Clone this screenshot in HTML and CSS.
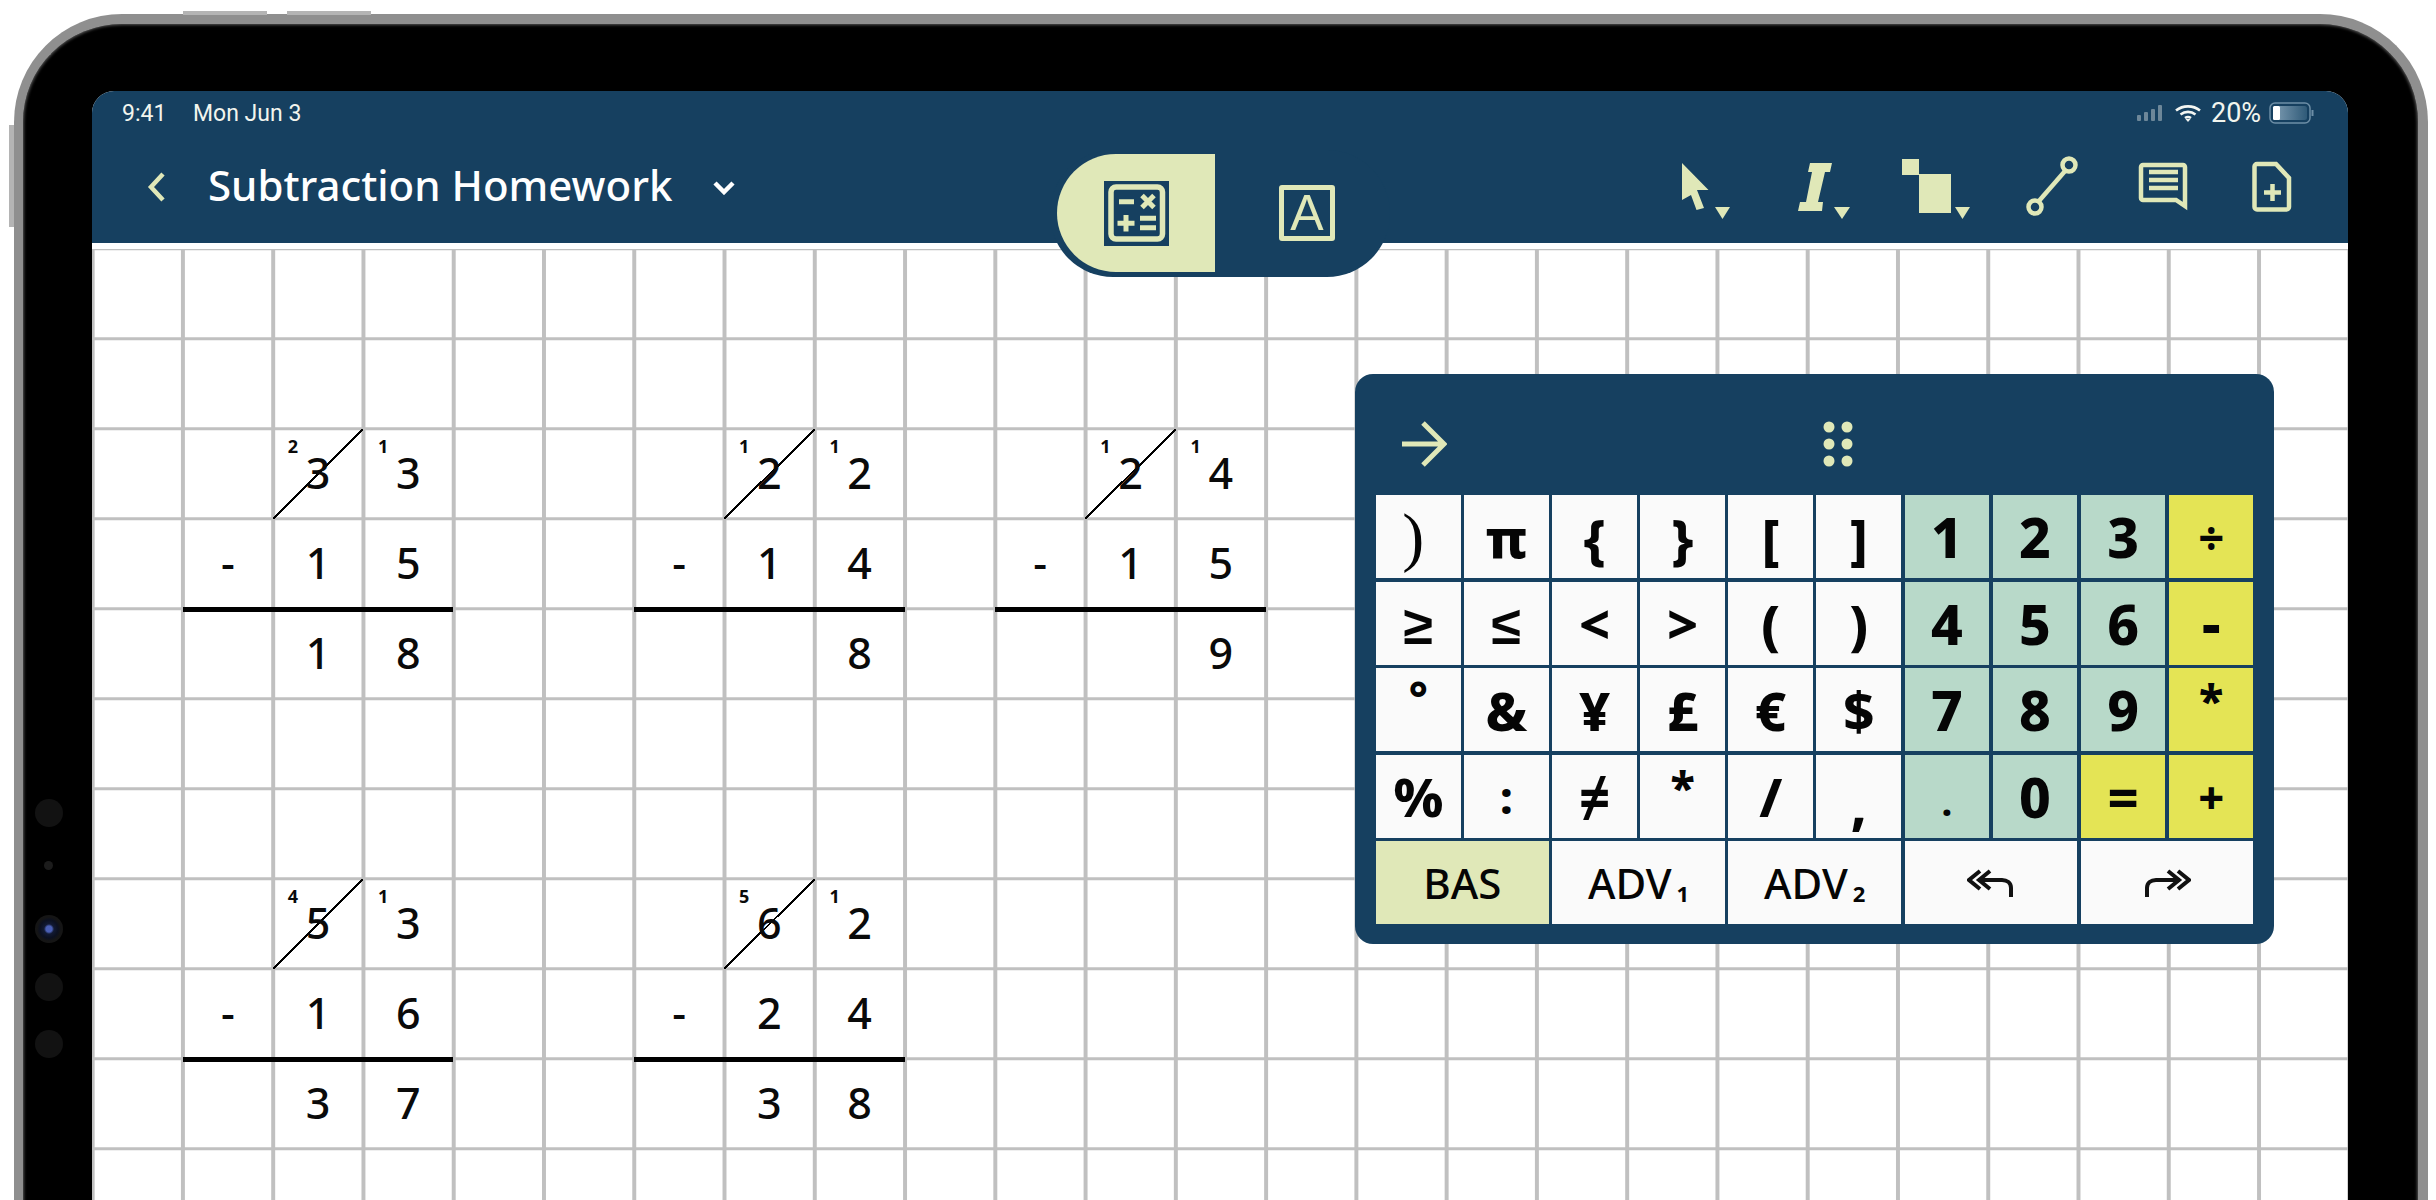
FILE: index.html
```html
<!DOCTYPE html>
<html lang="en">
<head>
<meta charset="utf-8">
<title>Subtraction Homework</title>
<link rel="stylesheet" href="styles.css">
</head>
<body>
<div class="device">
  <span class="hw vol vol-a"></span><span class="hw vol vol-b"></span><span class="hw side"></span>
  <span class="cam cam-1"></span><span class="cam cam-2"></span><span class="cam cam-3"></span><span class="cam cam-4"></span><span class="cam cam-5"></span>
  <div class="screen">
    <header class="appbar">
      <div class="status">
        <span class="time">9:41</span><span class="date">Mon Jun 3</span>
        <div class="status-right">
          <svg class="signal" viewBox="0 0 28 18"><rect x="0" y="11" width="4" height="6" rx="1"/><rect x="7" y="8" width="4" height="9" rx="1"/><rect x="14" y="5" width="4" height="12" rx="1"/><rect x="21" y="1" width="4" height="16" rx="1"/></svg>
          <svg class="wifi" viewBox="0 0 28 18"><path d="M2 6.500C9 1 19 1 26 6.500M6.500 10.500c4.500-3.500 10.500-3.500 15 0M11 14c1.800-1.200 4.200-1.200 6 0" fill="none" stroke="#f4f6f2" stroke-width="2.600"/><path d="M11.500 15h5L14 18z" fill="#f4f6f2"/></svg>
          <span class="pct">20%</span>
          <svg class="battery" viewBox="0 0 46 22"><defs><linearGradient id="bf" x1="0" x2="1" y1="0" y2="0"><stop offset="0" stop-color="#7f9db3"/><stop offset="1" stop-color="#2f5a78"/></linearGradient></defs><rect x="1" y="1" width="40" height="20" rx="5" fill="none" stroke="#6d8ea6" stroke-width="1.500"/><rect x="4" y="4" width="34" height="14" rx="2.500" fill="url(#bf)"/><rect x="4" y="4" width="7" height="14" rx="1.500" fill="#fff"/><path d="M43.500 8v6" stroke="#6d8ea6" stroke-width="2" fill="none"/></svg>
        </div>
      </div>
      <div class="toolbar">
        <svg class="back" viewBox="0 0 19 30"><path d="M16 2 4 15l12 13" fill="none" stroke="#e0e8b8" stroke-width="4.500"/></svg>
        <h1 class="title">Subtraction Homework</h1>
        <svg class="caret" viewBox="0 0 24 15"><path d="M3 3l9 9 9-9" fill="none" stroke="#fff" stroke-width="4.500"/></svg>
        <div class="tools">
          <svg class="tool" viewBox="0 0 110 64"><path class="fill" d="M2 8 28.500 35H17l7 18-7.500 2L11 40l-9 5z"/><path class="fill" d="M35 52h15l-7.500 12z"/></svg>
          <svg class="tool" viewBox="0 0 110 64"><path class="fill" d="M20 8h22l-2 9h-5l-7 30h5l-1 9H8l2-9h6l6-30h-4z"/><path class="fill" d="M44 52h16l-8 12z"/></svg>
          <svg class="tool" viewBox="0 0 110 64"><path class="fill" d="M2 4h17v16H2zM19 19h32v39H19z"/><path class="fill" d="M55 52h15l-7.500 12z"/></svg>
          <svg class="tool" viewBox="0 0 110 64"><circle class="line" cx="59" cy="10" r="6.500"/><circle class="line" cx="25" cy="52" r="6.500"/><path class="line" d="M55.500 15.500 28.500 46.500"/></svg>
          <svg class="tool" viewBox="0 0 110 64"><path class="line" d="M23 10h40a2 2 0 0 1 2 2v39l-9-6H23a2 2 0 0 1-2-2V12a2 2 0 0 1 2-2z"/><path class="line" d="M29 17h29M29 25h29M29 33h29"/></svg>
          <svg class="tool" viewBox="0 0 110 64"><path class="line" d="M27 9h19l13 14v29a2.500 2.500 0 0 1-2.500 2.500H27a2.500 2.500 0 0 1-2.500-2.500V11.500A2.500 2.500 0 0 1 27 9z"/><path class="line" d="M42.500 29v17M34 37.500h17"/></svg>
        </div>
      </div>
      <div class="modes">
        <div class="mode mode-on">
          <svg class="mode-calc" viewBox="0 0 65 65"><rect width="65" height="65" fill="#164060"/><rect x="7" y="6" width="51.500" height="52" rx="5" fill="none" stroke="#e0e8b8" stroke-width="5.500"/><path d="M15 20.700h15M38 14.500l12 12M50 14.500l-12 12M13.500 42.300h17M22 34v16.500M36 37.300h16M36 46.700h16" fill="none" stroke="#e0e8b8" stroke-width="5"/></svg>
        </div>
        <div class="mode mode-text"><span class="mode-a">A</span></div>
      </div>
    </header>

    <main class="paper">
      <section class="sum at-1">
        <div class="cell"></div><div class="cell struck">3<span class="carry">2</span></div><div class="cell">3<span class="carry">1</span></div>
        <div class="cell">-</div><div class="cell">1</div><div class="cell">5</div>
        <div class="cell"></div><div class="cell">1</div><div class="cell">8</div>
        <div class="rule"></div>
      </section>
      <section class="sum at-2">
        <div class="cell"></div><div class="cell struck">2<span class="carry">1</span></div><div class="cell">2<span class="carry">1</span></div>
        <div class="cell">-</div><div class="cell">1</div><div class="cell">4</div>
        <div class="cell"></div><div class="cell"></div><div class="cell">8</div>
        <div class="rule"></div>
      </section>
      <section class="sum at-3">
        <div class="cell"></div><div class="cell struck">2<span class="carry">1</span></div><div class="cell">4<span class="carry">1</span></div>
        <div class="cell">-</div><div class="cell">1</div><div class="cell">5</div>
        <div class="cell"></div><div class="cell"></div><div class="cell">9</div>
        <div class="rule"></div>
      </section>
      <section class="sum at-4">
        <div class="cell"></div><div class="cell struck">5<span class="carry">4</span></div><div class="cell">3<span class="carry">1</span></div>
        <div class="cell">-</div><div class="cell">1</div><div class="cell">6</div>
        <div class="cell"></div><div class="cell">3</div><div class="cell">7</div>
        <div class="rule"></div>
      </section>
      <section class="sum at-5">
        <div class="cell"></div><div class="cell struck">6<span class="carry">5</span></div><div class="cell">2<span class="carry">1</span></div>
        <div class="cell">-</div><div class="cell">2</div><div class="cell">4</div>
        <div class="cell"></div><div class="cell">3</div><div class="cell">8</div>
        <div class="rule"></div>
      </section>

      <aside class="keypad">
        <div class="keypad-head">
          <svg class="pad-arrow" viewBox="0 0 46 46"><path d="M1 23h41M22 2l21 21-21 21" fill="none" stroke="#e0e8b8" stroke-width="5"/></svg>
          <svg class="pad-grip" viewBox="0 0 30 46"><g fill="#e0e8b8"><circle cx="6" cy="6" r="5.500"/><circle cx="24" cy="6" r="5.500"/><circle cx="6" cy="23" r="5.500"/><circle cx="24" cy="23" r="5.500"/><circle cx="6" cy="40" r="5.500"/><circle cx="24" cy="40" r="5.500"/></g></svg>
        </div>
        <div class="keys">
          <button class="key paren-thin">)</button><button class="key">π</button><button class="key">{</button><button class="key">}</button><button class="key">[</button><button class="key">]</button><button class="key num">1</button><button class="key num">2</button><button class="key num">3</button><button class="key op mid">÷</button>
          <button class="key">≥</button><button class="key">≤</button><button class="key">&lt;</button><button class="key">&gt;</button><button class="key">(</button><button class="key">)</button><button class="key num">4</button><button class="key num">5</button><button class="key num">6</button><button class="key op dash">-</button>
          <button class="key raise mid">°</button><button class="key">&amp;</button><button class="key">¥</button><button class="key">£</button><button class="key">€</button><button class="key">$</button><button class="key num">7</button><button class="key num">8</button><button class="key num">9</button><button class="key op star mid">*</button>
          <button class="key">%</button><button class="key mid">:</button><button class="key">≠</button><button class="key star mid">*</button><button class="key">/</button><button class="key low">,</button><button class="key num low-dot">.</button><button class="key num">0</button><button class="key op">=</button><button class="key op mid">+</button>
          <button class="key wide on">BAS</button>
          <button class="key wide">ADV<span class="idx">1</span></button>
          <button class="key wide">ADV<span class="idx">2</span></button>
          <button class="key wide"><svg class="hist" viewBox="0 0 48 28"><path d="M13 2 2 11l11 9M23 2 12 11l11 9M12 11h23c5 0 9 3 9 8v9" fill="none" stroke="#111" stroke-width="4"/></svg></button>
          <button class="key wide"><svg class="hist" viewBox="0 0 48 28"><path d="M35 2l11 9-11 9M25 2l11 9-11 9M36 11H13c-5 0-9 3-9 8v9" fill="none" stroke="#111" stroke-width="4"/></svg></button>
        </div>
      </aside>
    </main>
  </div>
</div>
</body>
</html>
```
FILE: styles.css
```css
* { box-sizing: border-box; }
html, body { margin: 0; height: 1200px; overflow: hidden; background: #fff; }

.device {
  position: relative;
  width: 2414px;
  height: 1400px;
  margin: 14px 0 0 14px;
  padding: 67px 70px 0 69px;
  background: #000;
  border: solid #8f8f8f;
  border-width: 10px 10px 0 9px;
  border-radius: 108px;
  box-shadow: inset 0 0 3px 1px #555;
}
.hw { position: absolute; background: #b4b4b4; }
.vol { top: -13px; height: 4px; width: 84px; }
.vol-a { left: 160px; }
.vol-b { left: 264px; }
.side { left: -14px; top: 101px; width: 5px; height: 102px; }
.cam { position: absolute; left: 12px; width: 28px; height: 28px; border-radius: 50%; background: #121212; }
.cam-1 { top: 775px; }
.cam-2 { top: 837px; left: 21px; width: 9px; height: 9px; background: #1c1c1c; }
.cam-3 { top: 891px; background: radial-gradient(circle, #4a5fb5 0 3px, #121a33 5px, #0b1020 9px, #151515 12px); }
.cam-4 { top: 949px; }
.cam-5 { top: 1006px; }

.screen { position: relative; height: 1300px; background: #fff; border-radius: 22px 22px 0 0; overflow: hidden; }

.appbar { position: relative; z-index: 2; height: 152px; background: #164060; font-family: "Noto Sans", sans-serif; }
.status { display: flex; align-items: center; height: 44px; padding: 0 33px 0 30px; color: #f2f5ee; font: 23px Roboto, sans-serif; }
.time { width: 71px; }
.status-right { display: flex; align-items: center; margin-left: auto; }
.signal { width: 28px; height: 18px; margin-right: 9px; fill: #6d8799; }
.wifi { width: 28px; height: 18px; margin-right: 9px; }
.pct { font-size: 27px; width: 58px; }
.battery { width: 46px; height: 22px; }

.toolbar { display: flex; align-items: center; height: 108px; padding: 0 8px 4px 55px; }
.back { width: 19px; height: 30px; margin-right: 42px; }
.title { margin: -5px 0 0; width: 464px; font-size: 42px; font-weight: 500; line-height: 1; color: #fff; white-space: nowrap; }
.caret { width: 24px; height: 15px; margin-left: 40px; }
.tools { display: flex; margin-left: auto; }
.tool { display: block; width: 110px; height: 64px; }
.fill { fill: #e0e8b8; }
.line { fill: none; stroke: #e0e8b8; stroke-width: 4.5; }

.modes {
  position: absolute; left: 958px; top: 59px;
  display: flex; width: 340px; height: 127px;
  padding: 4px 0 5px 7px;
  background: #164060;
  border-radius: 63px;
}
.mode { display: flex; align-items: center; height: 118px; }
.mode-on { width: 158px; justify-content: center; background: #e0e8b8; border-radius: 59px 0 0 59px; }
.mode-calc { width: 65px; height: 65px; }
.mode-text { margin-left: 64px; }
.mode-a {
  display: flex; align-items: center; justify-content: center;
  width: 56px; height: 56px;
  border: 5px solid #e0e8b8; border-radius: 3px;
  color: #e0e8b8; font: 50px/1 "Liberation Sans", sans-serif;
}

.paper {
  position: relative;
  display: grid;
  grid-template-columns: repeat(25, 90.28px);
  grid-auto-rows: 90px;
  height: 1148px;
  padding: 6.3px 0 0 .42px;
  background:
    linear-gradient(to right, #c0c0c0 3.5px, transparent 3.5px) -1.33px 0 / 90.28px 90px,
    linear-gradient(to bottom, #c0c0c0 3.5px, transparent 3.5px) 0 -1.75px / 90.28px 90px,
    #fff;
  background-origin: content-box;
  background-clip: content-box;
  font-family: "Noto Sans", sans-serif;
}

.sum {
  position: relative;
  display: grid;
  grid-template-columns: repeat(3, 90.28px);
  grid-template-rows: repeat(3, 90px);
  grid-row-end: span 3;
  grid-column-end: span 3;
}
.at-1 { grid-column-start: 2; grid-row-start: 3; }
.at-2 { grid-column-start: 7; grid-row-start: 3; }
.at-3 { grid-column-start: 11; grid-row-start: 3; }
.at-4 { grid-column-start: 2; grid-row-start: 8; }
.at-5 { grid-column-start: 7; grid-row-start: 8; }

.cell { position: relative; display: flex; align-items: center; justify-content: center; padding-bottom: 3px; font-size: 43px; font-weight: 500; line-height: 1; color: #0a0a0a; }
.struck { background: linear-gradient(to top left, transparent calc(50% - 1px), #000 calc(50% - 1px), #000 calc(50% + 1px), transparent calc(50% + 1px)); }
.carry { position: absolute; left: 20px; top: 17px; transform: translate(-50%, -50%); font-size: 18px; font-weight: 700; }
.rule { position: absolute; left: 0; right: 0; top: 178px; height: 5px; background: #000; }

.keypad {
  position: absolute; left: 1263px; top: 131px;
  width: 919px; height: 570px;
  padding: 0 20px 19px 21px;
  background: #164060;
  border-radius: 18px;
}
.keypad-head { display: flex; align-items: center; height: 121px; padding: 18px 0 0 25px; }
.pad-arrow { width: 46px; height: 46px; }
.pad-grip { width: 30px; height: 46px; margin-left: 376px; }
.keys {
  display: grid;
  grid-template-columns: repeat(10, 84.6px);
  grid-auto-rows: 83px;
  gap: 3.5px;
}
.key {
  display: flex; align-items: center; justify-content: center;
  padding: 0; border: 0; border-radius: 0;
  background: #fafafa; color: #050505;
  font: 800 54px/1 "Noto Sans", sans-serif;
}
.num { background: #b8d9c9; font-size: 55px; }
.op { background: #e4e455; }
.mid { font-size: 45px; }
.dash { font-size: 58px; }
.raise { padding-bottom: 26px; }
.star { padding-bottom: 20px; }
.low { padding-top: 16px; }
.low-dot { padding-top: 10px; font-size: 40px; font-weight: 700; }
.paren-thin { font-weight: 400; font-family: "Liberation Serif", serif; font-size: 66px; padding-right: 10px; }
.wide { grid-column-end: span 2; font-size: 42px; font-weight: 500; }
.on { background: #e0e8b8; }
.idx { font-size: 22px; font-weight: 700; margin: 20px 0 0 5px; }
.hist { width: 48px; height: 28px; }
```
